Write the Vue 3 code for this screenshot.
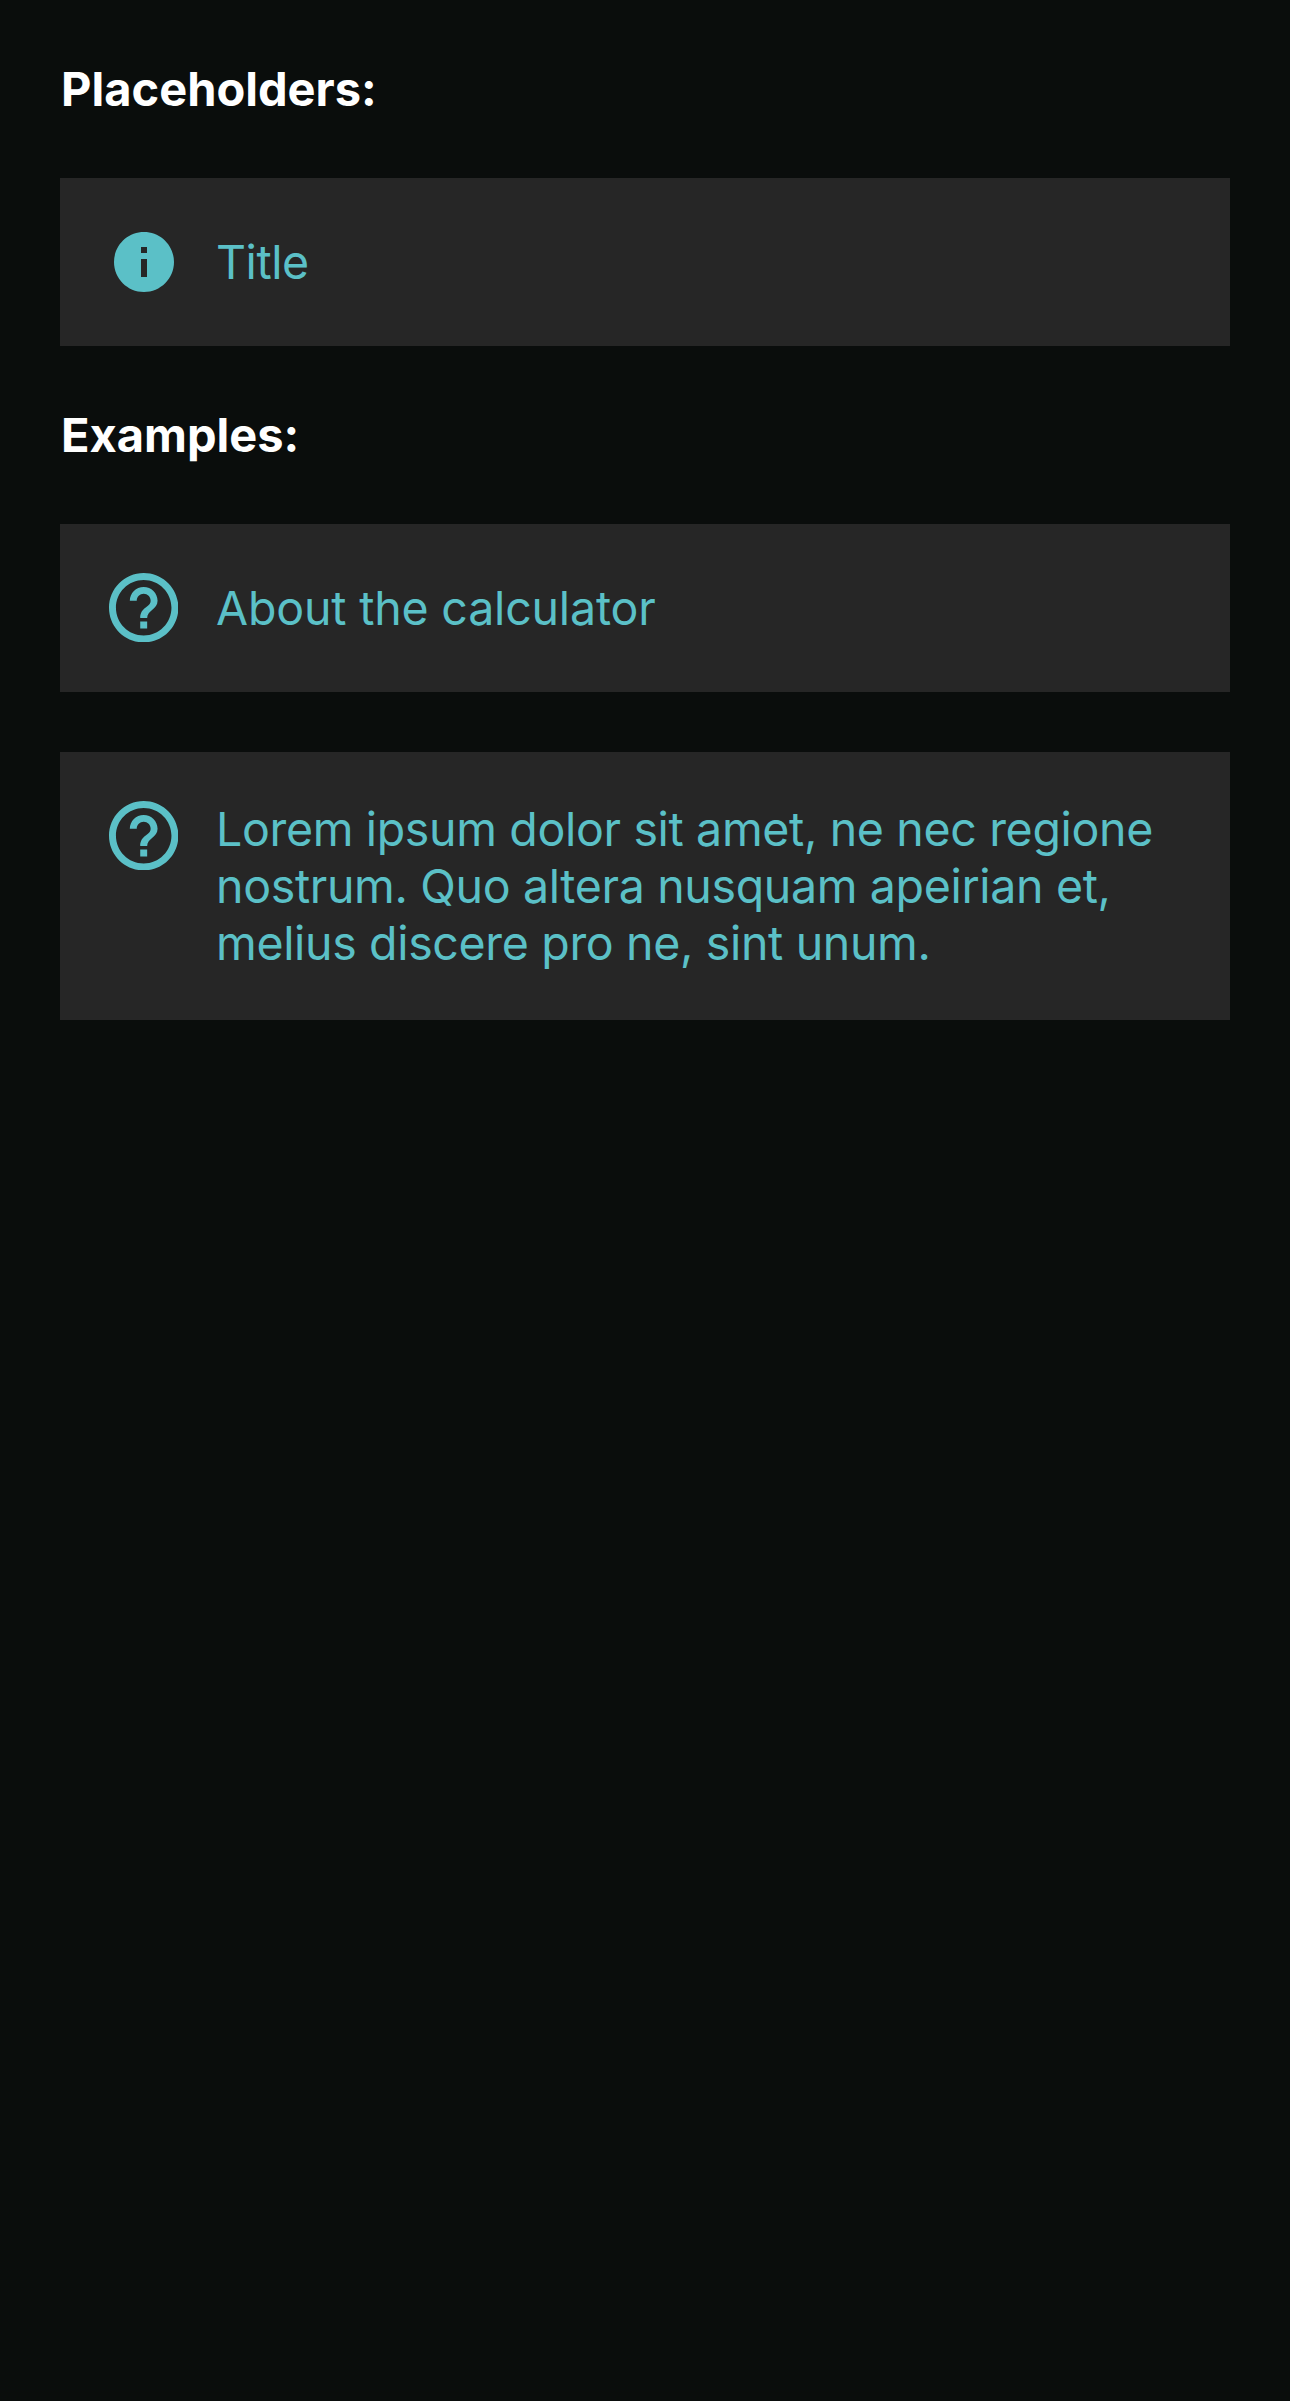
<script setup>
const help = 'M11 18h2v-2h-2v2zm1-16C6.48 2 2 6.48 2 12s4.48 10 10 10 10-4.48 10-10S17.52 2 12 2zm0 18c-4.41 0-8-3.59-8-8s3.59-8 8-8 8 3.59 8 8-3.59 8-8 8zm0-14c-2.21 0-4 1.79-4 4h2c0-1.1.9-2 2-2s2 .9 2 2c0 2-3 1.75-3 5h2c0-2.25 3-2.5 3-5 0-2.21-1.79-4-4-4z'
const info = 'M12 2C6.48 2 2 6.48 2 12s4.48 10 10 10 10-4.48 10-10S17.52 2 12 2zm1 15h-2v-6h2v6zm0-8h-2V7h2v2z'
const sections = [
  { title: 'Placeholders:', items: [{ icon: info, kind: 'info', lines: ['Title'] }] },
  { title: 'Examples:', items: [
    { icon: help, kind: 'help', lines: ['About the calculator'] },
    { icon: help, kind: 'help', lines: ['Lorem ipsum dolor sit amet, ne nec regione', 'nostrum. Quo altera nusquam apeirian et,', 'melius discere pro ne, sint unum.'] }
  ] }
]
</script>

<template>
  <main class="page">
    <section v-for="s in sections" :key="s.title">
      <h2>{{ s.title }}</h2>
      <div class="list">
        <div v-for="(item, i) in s.items" :key="i" class="card" :class="[item.kind + '-card', { multi: item.lines.length > 1 }]">
          <div class="icon"><svg :class="item.kind" viewBox="2 2 20 20"><path :d="item.icon" /></svg></div>
          <p><span v-for="line in item.lines" :key="line">{{ line }}</span></p>
        </div>
      </div>
    </section>
  </main>
</template>

<style>
body { background: #0a0d0c; }
</style>
<style scoped>
.page { box-sizing: border-box; min-height: 2401px; padding: 0 60px; background: #0a0d0c; font-family: Inter, "Liberation Sans", sans-serif; }
h2 { box-sizing: border-box; height: 178px; margin: 0; padding: 60px 0 0 1px; font-size: 47px; line-height: 57px; font-weight: 700; color: #fff; letter-spacing: 0; }
.list { display: flex; flex-direction: column; gap: 60px; }
.card { box-sizing: border-box; height: 168px; display: flex; background: #262626; color: #5bc0c7; }
.card.multi { height: 268px; }
.icon { width: 72px; height: 72px; margin: 48px 36px 0 48px; display: flex; align-items: center; justify-content: center; }
svg { fill: currentColor; }
.info { width: 60px; height: 60px; }
.help { width: 69.4px; height: 69.4px; margin: 0 1px 1.4px 0; }
p { margin: 56px 0 0; font-size: 46.5px; line-height: 57px; letter-spacing: -0.18px; white-space: nowrap; }
.info-card p { letter-spacing: -0.45px; }
.multi p { margin-top: 49px; letter-spacing: -0.34px; }
span { display: block; }
</style>
